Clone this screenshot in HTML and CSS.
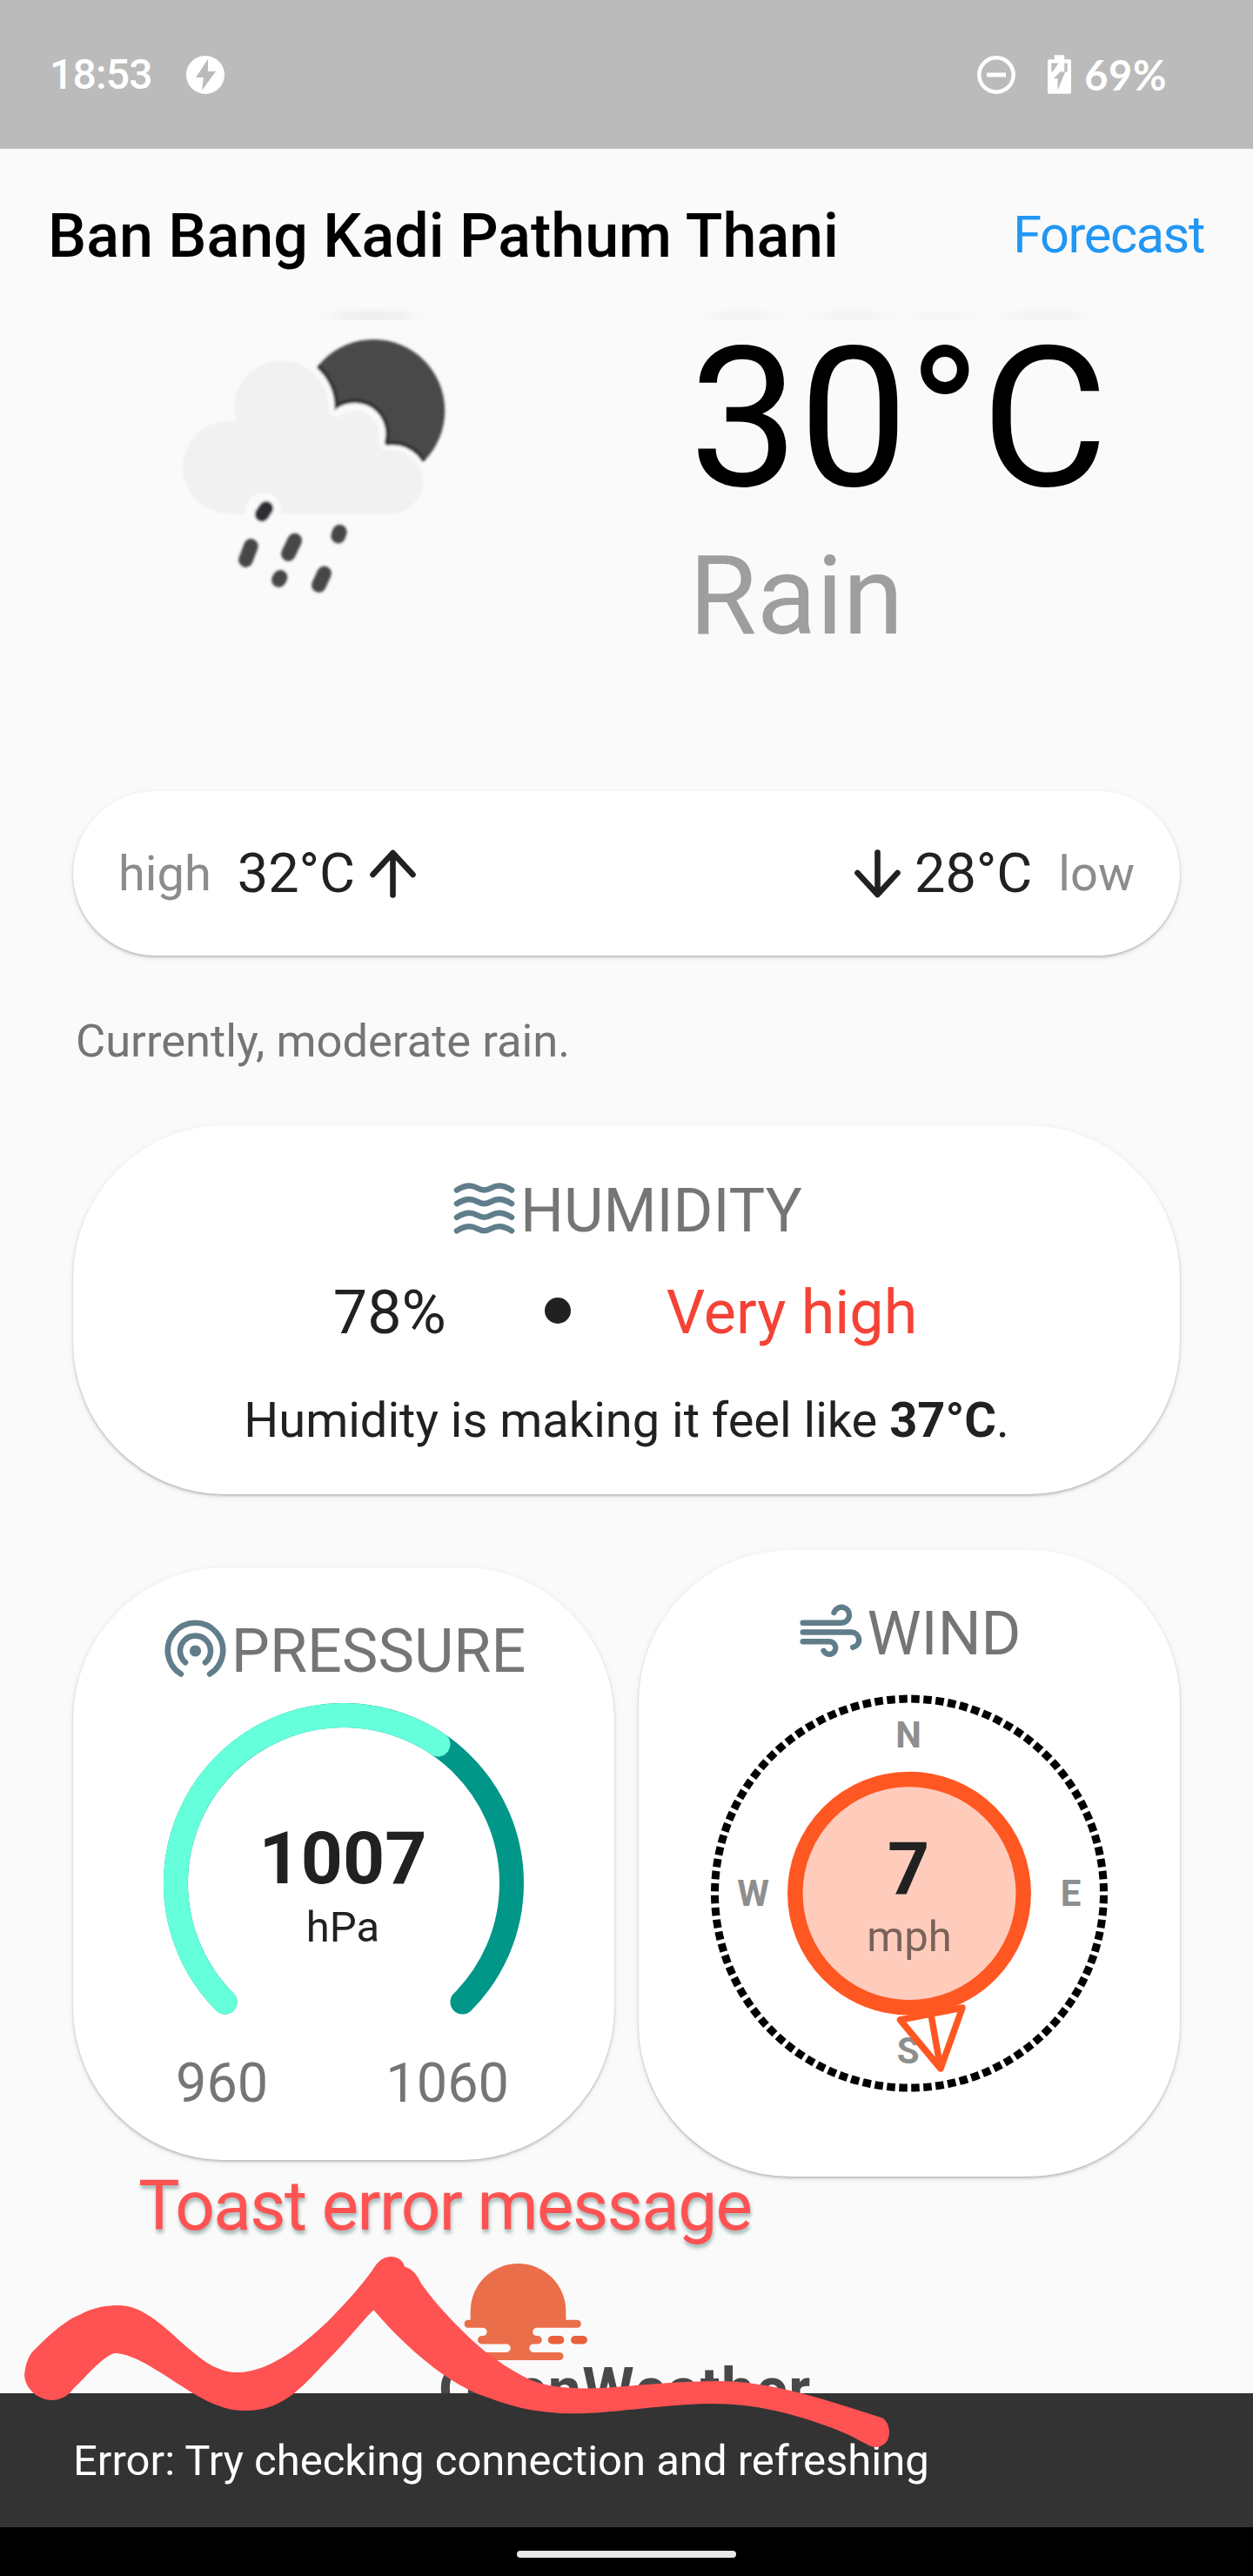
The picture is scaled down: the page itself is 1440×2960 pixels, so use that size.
FILE: index.html
```html
<!DOCTYPE html>
<html lang="en">
<head>
<meta charset="utf-8">
<title>Weather</title>
<link rel="stylesheet" href="styles.css">
</head>
<body>
<div class="screen">
  <div class="status-bar">
    <span class="clock">18:53</span>
    <svg class="bolt-badge" viewBox="0 0 44 44"><circle cx="22" cy="22" r="22" fill="#fff"/><path d="M25 4 11 25h9l-2 15 16-22h-9z" fill="#bbb"/></svg>
    <div class="status-right">
      <svg class="dnd" viewBox="0 0 44 44"><circle cx="22" cy="22" r="19.7" fill="none" stroke="#fff" stroke-width="4.4"/><path d="M11 22h22" stroke="#fff" stroke-width="5"/></svg>
      <svg class="battery" viewBox="0 0 28 46"><path d="M8 0h12v5h6a2 2 0 0 1 2 2v37a2 2 0 0 1-2 2H2a2 2 0 0 1-2-2V7a2 2 0 0 1 2-2h6z" fill="#fff"/><path d="M4.500 9.500H13L6 20H4.500zM20 9.500h3.500V20H20zM15 20h6L12 42V28H7z" fill="#bbb"/></svg>
      <span class="charge">69%</span>
    </div>
  </div>

  <header class="top-bar">
    <h1 class="place">Ban Bang Kadi Pathum Thani</h1>
    <a class="forecast-link">Forecast</a>
    <svg class="scroll-haze" viewBox="0 0 1440 30">
      <defs><filter id="haze" x="-20%" y="-50%" width="140%" height="200%"><feGaussianBlur stdDeviation="10 5"/></filter></defs>
      <g fill="#000" filter="url(#haze)">
        <ellipse cx="428" cy="26" rx="48" ry="6" opacity=".06"/>
        <ellipse cx="852" cy="26" rx="42" ry="5" opacity=".035"/>
        <ellipse cx="980" cy="26" rx="42" ry="5" opacity=".035"/>
        <ellipse cx="1082" cy="26" rx="34" ry="4" opacity=".03"/>
        <ellipse cx="1201" cy="26" rx="46" ry="5" opacity=".04"/>
      </g>
    </svg>
  </header>

  <main class="content">
    <section class="current">
      <svg class="weather-icon" viewBox="0 50 1260 1090">
        <defs>
          <filter id="soft"><feGaussianBlur stdDeviation="5"/></filter>
          <clipPath id="moon"><circle cx="748" cy="365" r="246"/></clipPath>
        </defs>
        <g filter="url(#soft)">
          <circle cx="748" cy="365" r="246" fill="#48484a"/>
          <g clip-path="url(#moon)" fill="#303032">
            <circle cx="430" cy="355" r="198"/><circle cx="683" cy="445" r="121"/><circle cx="812" cy="605" r="136"/>
          </g>
          <g fill="#fafafa">
            <circle cx="430" cy="355" r="184"/><circle cx="683" cy="445" r="107"/><circle cx="812" cy="605" r="122"/><path d="M430 400h250l110 80v150H430z"/>
          </g>
          <g fill="#f1f1f1">
            <circle cx="430" cy="355" r="163"/><circle cx="250" cy="560" r="160"/><circle cx="683" cy="450" r="85"/><circle cx="808" cy="610" r="110"/>
            <path d="M290 370h300l150 90 60 60v200H250z"/>
          </g>
          <circle cx="368" cy="710" r="62" fill="#fafafa"/>
          <g stroke="#464648" stroke-width="50" stroke-linecap="round">
            <path d="M377 702 363 723" stroke="#2e2e30"/><path d="m325 832-18 48M476 813l-22 46M578 926l-19 41"/><path d="m631 783-5 15M426 940l-5 9"/>
          </g>
        </g>
      </svg>
      <div class="reading">
        <div class="temperature">30°C</div>
        <div class="condition">Rain</div>
      </div>
    </section>

    <section class="card range">
      <div class="range-side">
        <span class="range-label">high</span>
        <span class="range-value">32°C</span>
        <svg class="arrow arrow-up" viewBox="0 0 53 56"><path d="M3.500 29 26.500 4l23 25M26.500 5v47.500" /></svg>
      </div>
      <div class="range-side">
        <svg class="arrow arrow-down" viewBox="0 0 53 56"><path d="M3.500 27l23 25 23-25M26.500 51V3.500"/></svg>
        <span class="range-value">28°C</span>
        <span class="range-label">low</span>
      </div>
    </section>

    <p class="summary">Currently, moderate rain.</p>

    <section class="card humidity">
      <h2 class="card-title">
        <svg class="title-icon" viewBox="-3.500 -6 77 77"><g fill="none" stroke="#607d8b" stroke-width="6.600" stroke-linecap="round"><path id="wave" d="M3.500 8.500C10 4.500 13 3.500 18 3.500C26 3.500 28 8.500 35 8.500S44 3.500 52 3.500C57 3.500 60 4.500 66.500 8.500"/><use href="#wave" y="15.600"/><use href="#wave" y="31.200"/><use href="#wave" y="46.800"/></g></svg>
        HUMIDITY
      </h2>
      <div class="humidity-row">
        <span>78%</span><span class="dot"></span><span class="level">Very high</span>
      </div>
      <p class="feels">Humidity is making it feel like <b>37°C</b>.</p>
    </section>

    <div class="pair">
      <section class="card pressure">
        <h2 class="card-title">
          <svg class="title-icon" viewBox="-3.500 -4 77 77"><g fill="none" stroke="#607d8b" stroke-width="6.600" stroke-linecap="round"><path d="M18.400 61.500A31.700 31.700 0 1 1 51.600 61.500"/><path d="M23.500 48.300A17.500 17.500 0 1 1 46.500 48.300"/></g><circle cx="35" cy="35" r="6.600" fill="#607d8b"/></svg>
          PRESSURE
        </h2>
        <svg class="gauge" viewBox="0 0 414 360">
          <g fill="none" stroke-width="28" stroke-linecap="round">
            <path d="M70.500 343.500A193 193 0 1 1 343.500 343.500" stroke="#009688"/>
            <path d="M70.500 343.500A193 193 0 0 1 315.500 47.400" stroke="#66ffdc"/>
          </g>
          <text class="gauge-value" x="206" y="206.500">1007</text>
          <text class="gauge-unit" x="206" y="273.500">hPa</text>
        </svg>
        <div class="scale"><span>960</span><span>1060</span></div>
      </section>

      <section class="card wind">
        <h2 class="card-title">
          <svg class="title-icon" viewBox="-3.500 -4.500 77 77"><g fill="none" stroke="#607d8b" stroke-width="6.400" stroke-linecap="round"><path d="M3.200 21.300H47.700A9 9 0 1 0 39 9.500"/><path d="M3.200 32H59A8.800 8.800 0 0 1 60.700 49.400"/><path d="M3.200 42.700H33.400A7.300 7.300 0 1 1 27 53.300"/></g></svg>
          WIND
        </h2>
        <svg class="compass" viewBox="0 0 456 457">
          <circle cx="228" cy="228.600" r="223.500" fill="none" stroke="#000" stroke-width="9" pathLength="1000" stroke-dasharray="6.800 3.200" stroke-dashoffset="-1.600"/>
          <g class="bearing"><text x="227" y="61">N</text><text x="48.700" y="243.400">W</text><text x="413.600" y="243.400">E</text><text x="226.700" y="424">S</text></g>
          <circle cx="228" cy="228.600" r="131.200" fill="#ffccbc" stroke="#ff5722" stroke-width="17.500"/>
          <path d="M217.500 374 289 360 264 430ZM253 368 264 430" fill="none" stroke="#ff5722" stroke-width="7.500" stroke-linejoin="round"/>
          <text class="gauge-value" x="227" y="229">7</text>
          <text class="wind-unit" x="228" y="295">mph</text>
        </svg>
      </section>
    </div>

    <div class="provider">
      <svg class="sun" viewBox="310 90 430 340"><path fill="#ea6e49" d="M333 288V258A165 165 0 0 1 663 258V288H702A13.500 13.500 0 0 1 702 315H562A14 14 0 0 0 562 343H566A14 14 0 0 1 566 371H551A14.500 14.500 0 0 0 551 400H641A13.500 13.500 0 0 1 641 427H380A13.500 13.500 0 0 1 380 400H457A14.500 14.500 0 0 0 457 371H372A14 14 0 0 1 372 343H376A14 14 0 0 0 376 315H325A13.500 13.500 0 0 1 325 288Z"/><g fill="#e9603a"><rect x="601" y="343" width="56" height="28" rx="14"/><rect x="680" y="343" width="57" height="28" rx="14"/></g></svg>
      <div class="provider-name">OpenWeather</div>
    </div>
  </main>

  <div class="snackbar">Error: Try checking connection and refreshing</div>
  <div class="nav-bar"><div class="nav-handle"></div></div>

  <div class="note">Toast error message</div>
  <svg class="scribble" viewBox="0 0 1568 1440" preserveAspectRatio="none"><path fill="#ff5252" d="M40 745Q42 700 52 670C75 620 105 560 130 540C155 512 175 507 195 507C225 507 255 550 300 640C330 695 355 738 388 738C440 740 500 640 545 545C575 480 600 420 615 370C622 350 630 339 641 339C652 340 660 352 663 374C675 380 683 400 690 432C710 490 735 550 760 600C790 665 830 725 870 765C905 795 960 798 1010 788C1060 780 1120 768 1180 768C1260 772 1330 815 1445 895C1460 915 1458 960 1453 975C1448 990 1440 997 1432 996C1420 990 1405 965 1370 935C1300 880 1240 846 1165 846C1090 848 1000 880 945 880C870 880 830 850 780 810C720 755 660 640 612 523C590 570 560 650 530 710C490 800 460 870 402 870C350 870 310 800 260 735C235 700 205 670 187 672C165 690 145 745 120 795C110 825 95 834 84 834C60 832 40 790 40 745Z"/></svg>
</div>
</body>
</html>
```
FILE: styles.css
```css
* { box-sizing: border-box; }
body { margin: 0; background: #fafafa; font-family: Roboto, "Liberation Sans", sans-serif; color: #212121; }
h1, h2, p { margin: 0; font-weight: 400; }
svg { display: block; flex: none; overflow: visible; }

.screen { position: relative; width: 1440px; height: 2960px; display: flex; flex-direction: column; overflow: hidden; }

.status-bar { height: 171px; flex: none; background: #bbb; color: #fff; display: flex; align-items: center; padding: 0 99px 0 57px; font: 700 47px Lato, sans-serif; }
.clock { width: 115px; font: 500 48px Roboto, sans-serif; letter-spacing: -0.8px; }
.bolt-badge { width: 44px; height: 44px; margin-left: 42px; }
.status-right { margin-left: auto; display: flex; align-items: center; }
.dnd { width: 44px; height: 44px; }
.battery { width: 27px; height: 45px; margin-left: 37px; }
.charge { margin-left: 15px; letter-spacing: 0.6px; }

.top-bar { position: relative; height: 200px; flex: none; display: flex; align-items: center; justify-content: space-between; padding: 0 56px 0 55px; }
.place { font-size: 70px; font-weight: 500; color: #000; white-space: nowrap; }
.forecast-link { font-size: 59.5px; letter-spacing: -1.4px; color: #2196f3; position: relative; top: -1px; }
.scroll-haze { position: absolute; left: 0; bottom: 3px; width: 1440px; height: 30px; overflow: hidden; }

.content { height: 2403px; flex: none; overflow: hidden; margin-top: -24px; padding: 24px 84px 0; }
.current { display: flex; height: 538px; margin: 0 -84px; padding-left: 180px; }
.weather-icon { width: 420px; height: 363px; margin-top: -4px; }
.reading { margin-left: 192px; }
.temperature { font-size: 224px; line-height: 222px; color: #000; }
.condition { font-size: 126px; line-height: 148px; margin-top: 18px; color: #9e9e9e; }

.card { background: #fff; box-shadow: 0 2px 3px rgba(0, 0, 0, .22), 0 2px 8px rgba(0, 0, 0, .07); }
.range { height: 189px; border-radius: 95px; display: flex; align-items: center; justify-content: space-between; padding: 0 52px 0 52px; }
.range-side { display: flex; align-items: center; }
.range-label { font-size: 56px; color: #8c8c8c; }
.range-value { font-size: 63px; }
.range-label + .range-value, .range-value + .range-label { margin-left: 30px; }
.arrow { width: 53px; height: 56px; fill: none; stroke: #212121; stroke-width: 6.6; stroke-linecap: round; stroke-linejoin: round; }
.arrow-up { margin-left: 17px; }
.arrow-down { margin-right: 16px; }

.summary { font-size: 52.5px; line-height: 62px; color: #757575; margin: 67px 0 66px 3px; }

.card-title { display: flex; align-items: center; justify-content: center; gap: 3px; height: 84px; font-size: 70px; line-height: 84px; color: #757575; }
.title-icon { width: 77px; height: 77px; }
.humidity { height: 424px; border-radius: 175px; padding-top: 56px; }
.humidity-row { display: flex; align-items: center; justify-content: center; gap: 113px; height: 84px; margin-top: 33px; font-size: 70px; }
.dot { width: 30px; height: 30px; margin-top: -5px; border-radius: 50%; background: #212121; }
.level { margin: 0 3px 0 -3px; color: #f44336; }
.feels { margin-top: 48px; text-align: center; font-size: 56px; line-height: 68px; }

.pair { display: grid; grid-template-columns: 1fr 1fr; gap: 28px; align-items: center; margin-top: 64px; height: 720px; }
.pressure { height: 681px; border-radius: 175px; padding-top: 54px; }
.gauge { width: 414px; height: 360px; margin: 18px auto 0; }
.gauge-value { font-size: 84px; font-weight: 700; fill: #212121; text-anchor: middle; }
.gauge-unit { font-size: 49px; fill: #212121; text-anchor: middle; }
.scale { display: flex; justify-content: space-between; margin-top: 40px; padding: 0 121px 0 118px; font-size: 63px; line-height: 74px; color: #757575; }
.wind { height: 720px; border-radius: 175px; padding-top: 54px; }
.compass { width: 456px; height: 457px; margin: 28px auto 0; }
.bearing { font-size: 42px; font-weight: 700; fill: #8e8e8e; text-anchor: middle; }
.wind-unit { font-size: 49px; fill: #796259; text-anchor: middle; }

.provider { margin: 99px 0 0 420px; }
.sun { width: 143px; height: 113px; margin-left: 29px; }
.provider-name { margin-top: -7px; font-size: 68px; font-weight: 700; line-height: 80px; letter-spacing: 1.3px; color: #48484a; }

.snackbar { height: 154px; flex: none; background: #333; color: #fff; padding: 2px 84px 0; font-size: 49px; line-height: 152px; white-space: nowrap; }
.nav-bar { height: 56px; flex: none; background: #000; display: flex; justify-content: center; padding-top: 27px; }
.nav-handle { width: 252px; height: 8px; border-radius: 4px; background: #e8e8e8; }

.note { position: absolute; left: 159px; top: 2487px; font-size: 80px; line-height: 96px; letter-spacing: -1.6px; color: #ff5252; text-shadow: 1px 4px 4px rgba(0, 60, 60, .35); white-space: nowrap; }
.scribble { position: absolute; left: 0; top: 2480px; width: 1100px; height: 480px; }
```
